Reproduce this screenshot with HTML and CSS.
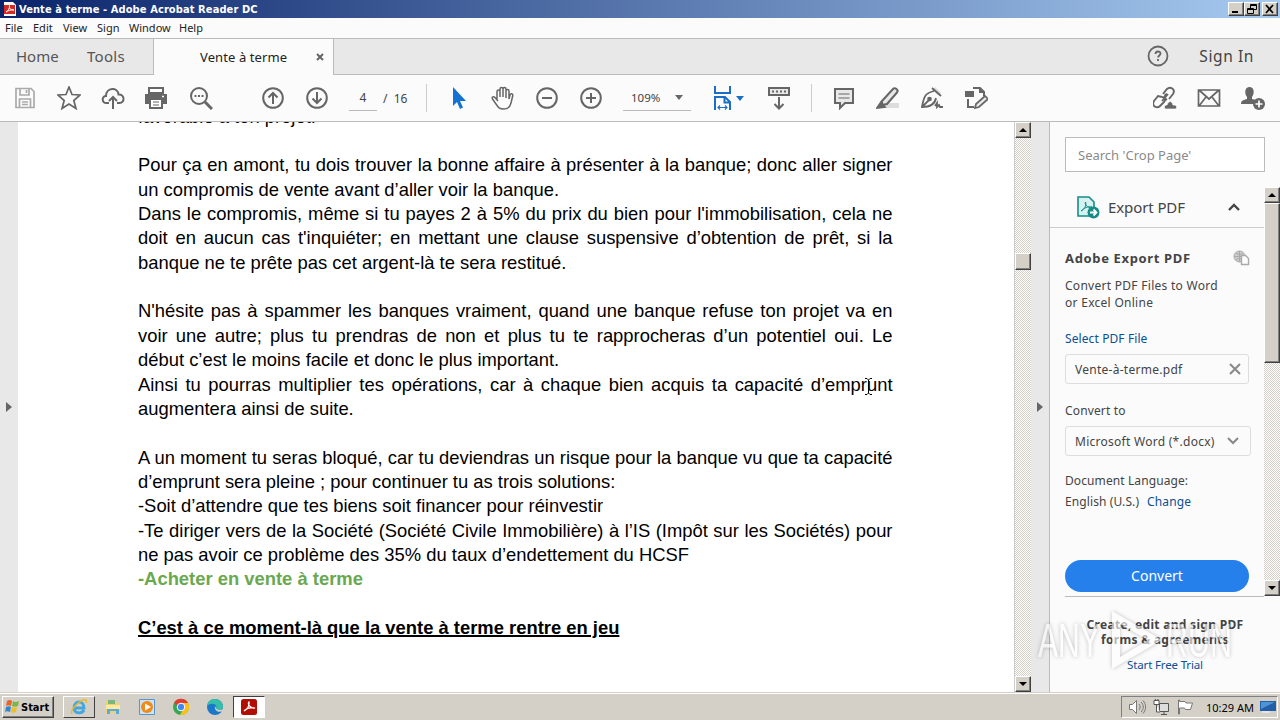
FILE: index.html
```
<!DOCTYPE html>
<html lang="en">
<head>
  <meta charset="UTF-8">
  <title>Vente à terme - Adobe Acrobat Reader DC</title>
  <link rel="stylesheet" href="styles.css">
</head>
<body>
  <div class="titlebar">
    <svg class="app-icon" width="12" height="16" viewBox="0 0 12 16"><path d="M0 1h9l3 3v11H0z" fill="#fff"/><path d="M0 4h11v9H0z" fill="#d9281e"/><path d="M2 11c2-1 4-4 3.500-6.500C5 8 7 9 10 9 7 8.500 4 9.500 2 11" fill="none" stroke="#fff"/></svg>
    <span class="title-text">Vente à terme - Adobe Acrobat Reader DC</span>
    <div class="window-buttons">
      <span class="win-btn"><svg width="12" height="10"><path d="M2 8h6" stroke="#000" stroke-width="2"/></svg></span>
      <span class="win-btn"><svg width="12" height="10" fill="none" stroke="#000"><path d="M4.500 4V.5h6v5H8M4 1.500h7M1.500 4.500h6v5h-6zM1 5.500h7"/></svg></span>
      <span class="win-btn close"><svg width="12" height="10"><path d="M2 1l7 8M9 1L2 9" stroke="#000" stroke-width="1.700"/></svg></span>
    </div>
  </div>
  <div class="menubar">
    <span class="menu-file">File</span><span class="menu-edit">Edit</span><span class="menu-view">View</span><span class="menu-sign">Sign</span><span class="menu-window">Window</span><span>Help</span>
  </div>
  <div class="tabbar">
    <div class="main-tabs"><span class="tab-home">Home</span><span class="tab-tools">Tools</span></div>
    <div class="doc-tab"><span>Vente à terme</span><svg width="8" height="8"><path d="M1 1l6 6M7 1L1 7" stroke="#666" stroke-width="2"/></svg></div>
    <div class="account">
      <svg width="22" height="22" viewBox="0 0 22 22"><circle cx="11" cy="11" r="9.500" fill="none" stroke="#666" stroke-width="1.800"/><path d="M8.500 9c0-3.300 5-3.200 5-.4 0 1.900-2.400 1.800-2.400 4M11 14v2" fill="none" stroke="#666" stroke-width="1.800"/></svg>
      <span class="sign-in">Sign In</span>
    </div>
  </div>

  <div class="toolbar">
    <span class="tool"><svg viewBox="0 0 24 24" stroke="#aaa"><path d="M3 2.500h15l3 3v16H3zM7 3v6h9V3M6.500 21v-8h11v8M13.500 4v3M9 16h6M9 18.500h6"/></svg></span>
    <span class="tool"><svg viewBox="0 0 24 24"><path d="M12 1l3 7.500 8 .5-6.200 5.500 2.200 8-7-4.500-7 4.500 2.200-8L1 9l8-.5z"/></svg></span>
    <span class="tool"><svg viewBox="0 0 24 24" stroke-width="2"><path d="M8 17H5.500C.5 17 .5 10 5 10 5 1 17 1 17.500 8.500 24 8 24 17 18.500 17H16M12 23V11M8 15l4-4 4 4"/></svg></span>
    <span class="tool printer"><svg viewBox="0 0 24 24"><path d="M5 2h14v5H5z" fill="#fff" stroke-width="2"/><path d="M1 8h22v10H1z" fill="#666" stroke="none"/><path d="M6 13h12v9H6z" fill="#fff" stroke-width="2"/><path d="M9 16h6M9 19h6" stroke-width="1"/><path d="M18 10.500h2" stroke="#fff"/></svg></span>
    <span class="tool"><svg viewBox="0 0 24 24"><circle cx="10" cy="10" r="8" stroke-width="2"/><path d="M16 16l7 7" stroke-width="3"/><path d="M5.500 10h2M9 10h2M12.500 10h2" stroke-width="2"/></svg></span>
    <span class="tool page-up"><svg viewBox="0 0 24 24"><circle cx="12" cy="12" r="9.800" stroke-width="2"/><path d="M12 18V7M7.500 11.500L12 7l4.500 4.500" stroke-width="2"/></svg></span>
    <span class="tool"><svg viewBox="0 0 24 24"><circle cx="12" cy="12" r="9.800" stroke-width="2"/><path d="M12 6v11M7.500 12.500L12 17l4.500-4.500" stroke-width="2"/></svg></span>
    <span class="page-input">4</span><span class="page-total">/&nbsp; 16</span>
    <span class="separator"></span>
    <span class="tool pointer"><svg viewBox="0 0 24 24"><path d="M6 1v19l4-4 3 7 3-1.500-3-6.500h6z" fill="#1473d2" stroke="none"/></svg></span>
    <span class="tool"><svg viewBox="0 0 24 24"><path d="M6 14V5.500c0-2 3-2 3 0V11 3c0-2 3-2 3 0v8V3c0-2 3-2 3 0v9V5c0-2 3-2 3 0v8l1-4c.7-2 3-1.500 2.800.5L20 17c-1 4-3 6-7 6-5 0-6-2-8-5l-3.500-5c-1-2 1-3 2.500-1.500L7 15" stroke-width="1.500"/></svg></span>
    <span class="tool"><svg viewBox="0 0 24 24"><circle cx="12" cy="12" r="9.800" stroke-width="2"/><path d="M7 12h10" stroke-width="2"/></svg></span>
    <span class="tool"><svg viewBox="0 0 24 24"><circle cx="12" cy="12" r="9.800" stroke-width="2"/><path d="M7 12h10M12 7v10" stroke-width="2"/></svg></span>
    <span class="zoom-box"><span>109%</span><i class="caret"></i></span>
    <span class="tool fit"><svg viewBox="0 0 24 24" stroke="#1a6fc4"><path d="M4 0v7h15V0M4 24V11h10l5 5v8M13.500 11v5.500H19" stroke-width="2"/><path d="M7 21.500h9M9 19.500l-2 2 2 2M14 19.500l2 2-2 2" stroke-width="1.200"/></svg><i class="caret blue"></i></span>
    <span class="tool"><svg viewBox="0 0 24 24"><path d="M2 2h20v7H2z" fill="#e8e8e8" stroke-width="2"/><path d="M5 5.500h14" stroke-width="2" stroke-dasharray="2 2"/><path d="M12 11v11M7.500 18l4.500 4.500 4.500-4.500" stroke-width="2"/></svg></span>
    <span class="separator sep-two"></span>
    <span class="tool"><svg viewBox="0 0 24 24"><path d="M3 3h18v14h-8l-5 5v-5H3z" fill="#e8e8e8" stroke-width="2"/><path d="M6.500 8h11M6.500 12h11" stroke-width="1.200"/></svg></span>
    <span class="tool"><svg viewBox="0 0 24 24"><path d="M10 17h13v5H8z" fill="#ddd" stroke="none"/><path d="M6 15L17 3c2-2 6 1 4 3.500L11 18l-5 1z" fill="#e8e8e8" stroke-width="2"/><path d="M1 22l4-6 4 5z" fill="#666"/></svg></span>
    <span class="tool"><svg viewBox="0 0 24 24"><path d="M15 1l6 6-3 2-5-5z" fill="#ddd" stroke="none"/><path d="M12 2l9 8M14 5C6 7 4 9 2 21c9 0 13-3 14-9M2 21l7-7M15 20l2-3 0 4 2-2 1 2h3" stroke-width="1.800"/><circle cx="9.500" cy="13" r="1.500" fill="#666"/></svg></span>
    <span class="tool"><svg viewBox="0 0 24 24"><path d="M9 2h7l4 4v4M16 2v4h4M4 13v8h6" stroke-width="2"/><path d="M1 5h9v6H1z" fill="#666" stroke="none"/><path d="M11 22l1-4 9-8 3 3-9 8z" fill="#e8e8e8"/></svg></span>
    <span class="tool share"><svg viewBox="0 0 24 24"><path d="M9 15l6-7M10 8l4-5c3-3 9 0 6 5l-4 5M9 11l-4-1-4 5c-3 5 3 8 6 5l4-4M9 11c3 0 4 3 2 5M14 8c-3 1-3 4 0 6" stroke-width="1.900"/><path d="M12 23c-2-4 2-4 2-4 2-5 5-4 6 0 4 0 4 2 3 4z" fill="#666" stroke="#fbfbfb" stroke-width=".7"/></svg></span>
    <span class="tool"><svg viewBox="0 0 24 24"><path d="M1.500 4h21v16h-21zM2 4l10 9L22 4M2 20l7-9M22 20l-7-9"/></svg></span>
    <span class="tool"><svg viewBox="0 0 24 24"><path d="M0 18c0-4 3-4 6-5V11C3 7 4 1 8.500 1S14 7 11 11v2l4 1-2 4z" fill="#666" stroke="none"/><circle cx="18" cy="18" r="6" fill="#666" stroke="none"/><path d="M14.500 18h7M18 14.500v7" stroke="#fff"/></svg></span>
  </div>

  <div class="workspace">
    <div class="side-strip left"><i class="arrow-right"></i></div>
    <div class="page">
      <div class="line">favorable à ton projet.</div>
      <div class="line"></div>
      <div class="line full">Pour ça en amont, tu dois trouver la bonne affaire à présenter à la banque; donc aller signer</div>
      <div class="line">un compromis de vente avant d’aller voir la banque.</div>
      <div class="line full">Dans le compromis, même si tu payes 2 à 5% du prix du bien pour l'immobilisation, cela ne</div>
      <div class="line full">doit en aucun cas t'inquiéter; en mettant une clause suspensive d’obtention de prêt, si la</div>
      <div class="line">banque ne te prête pas cet argent-là te sera restitué.</div>
      <div class="line"></div>
      <div class="line full">N'hésite pas à spammer les banques vraiment, quand une banque refuse ton projet va en</div>
      <div class="line full">voir une autre; plus tu prendras de non et plus tu te rapprocheras d’un potentiel oui. Le</div>
      <div class="line">début c’est le moins facile et donc le plus important.</div>
      <div class="line full">Ainsi tu pourras multiplier tes opérations, car à chaque bien acquis ta capacité d’emprunt</div>
      <div class="line">augmentera ainsi de suite.</div>
      <div class="line"></div>
      <div class="line full">A un moment tu seras bloqué, car tu deviendras un risque pour la banque vu que ta capacité</div>
      <div class="line">d’emprunt sera pleine ; pour continuer tu as trois solutions:</div>
      <div class="line">-Soit d’attendre que tes biens soit financer pour réinvestir</div>
      <div class="line full">-Te diriger vers de la Société (Société Civile Immobilière) à l’IS (Impôt sur les Sociétés) pour</div>
      <div class="line">ne pas avoir ce problème des 35% du taux d’endettement du HCSF</div>
      <div class="line green">-Acheter en vente à terme</div>
      <div class="line"></div>
      <div class="line strong">C’est à ce moment-là que la vente à terme rentre en jeu</div>
      <svg class="text-cursor" width="9" height="17" fill="none" stroke="#000"><path d="M1 .5h2l1.500 1.500L6 .5h2M4.500 2v13M1 16.500h2L4.500 15 6 16.500h2"/></svg>
    </div>
    <div class="scrollbar doc-scroll"><span class="sb-btn"><i class="up"></i></span><span class="sb-thumb"></span><span class="sb-btn"><i class="down"></i></span></div>
    <div class="side-strip right"><i class="arrow-right"></i></div>
    <div class="panel">
      <div class="search">Search 'Crop Page'</div>
      <div class="panel-body">
        <div class="panel-content">
          <div class="export-head">
            <svg width="24" height="24" viewBox="0 0 24 24" fill="none"><path d="M2 2h11l5 5v14H2z" fill="#d5f2f1" stroke="#168c87" stroke-width="1.600"/><path d="M5 16c3-1 6-6 4.500-9C8 9 12 14 16 12c-4-1-8 1-11 4" stroke="#168c87"/><circle cx="17.500" cy="17.500" r="6" fill="#168c87"/><path d="M14 17.500h6M17.500 14.500l3 3-3 3" stroke="#fff" stroke-width="1.800"/></svg>
            <span>Export PDF</span>
            <svg class="chevron" width="12" height="8"><path d="M1 7l5-5 5 5" fill="none" stroke="#444" stroke-width="2.400"/></svg>
          </div>
          <div class="export-form">
            <div class="form-title"><span>Adobe Export PDF</span><svg width="17" height="16" fill="none" stroke="#aaa"><circle cx="6.500" cy="6.500" r="5.500" fill="#ccc"/><path d="M1 6.500h11M6.500 1v11M3 3c3 2 5 2 7 0M3 10c2-2 4-2 6 0"/><path d="M8.500 5.500h4l3 3v6h-7z" fill="#fff" stroke-width="1.400"/></svg></div>
            <div class="form-desc"><span class="desc-one">Convert PDF Files to Word</span><br><span>or Excel Online</span></div>
            <a class="select-file">Select PDF File</a>
            <div class="field file"><span>Vente-à-terme.pdf</span><svg width="12" height="12"><path d="M1 1l10 10M11 1L1 11" stroke="#888" stroke-width="2"/></svg></div>
            <div class="convert-label">Convert to</div>
            <div class="field format"><span>Microsoft Word (*.docx)</span><svg width="12" height="8"><path d="M1 1l5 5 5-5" fill="none" stroke="#888" stroke-width="2"/></svg></div>
            <div class="language">Document Language:</div>
            <div class="language-value"><span>English (U.S.)</span><a>Change</a></div>
            <div class="convert-btn">Convert</div>
          </div>
        </div>
        <div class="scrollbar panel-scroll"><span class="sb-btn"><i class="up"></i></span><span class="sb-thumb"></span><span class="sb-btn"><i class="down"></i></span></div>
      </div>
      <div class="promo">
        <div class="promo-one">Create, edit and sign PDF</div>
        <div class="promo-two">forms &amp; agreements</div>
        <a>Start Free Trial</a>
      </div>
      <svg class="watermark" width="204" height="70" viewBox="0 0 204 70">
        <text x="3" y="49" textLength="62" lengthAdjust="spacingAndGlyphs">ANY</text>
        <text x="131" y="49" textLength="66" lengthAdjust="spacingAndGlyphs">RUN</text>
        <path d="M77 3v58l50-29zM85 16v33l28-17z" fill-rule="evenodd"/>
      </svg>
    </div>
  </div>

  <div class="taskbar">
    <div class="start"><svg width="17" height="16" viewBox="0 0 17 16"><path d="M3 2c2-1.500 4-1 5 0L7 7C5 6 3 6 2 7z" fill="#e9632c"/><path d="M9 2c2 1.500 4 1 6 0l-1 5c-2 1-4 1-6 0z" fill="#7db648"/><path d="M2 8c2-1 3-1 5 0l-1 5c-2-1-4-1-5 0z" fill="#2f87cf"/><path d="M8 8c2 1 3 1 5 0l-1 5c-2 1-4 1-5 0z" fill="#efbf2b"/></svg>Start</div>
    <span class="task raised"><svg viewBox="0 0 18 18" fill="none"><path d="M4 10h10c0-8-10-8-10 0 0 6 8 6 10 2" stroke="#43a7df" stroke-width="2.800"/><path d="M2 16C-1 12 12 0 16 2c1 1 0 2 0 3" stroke="#e9b82f" stroke-width="1.500"/></svg></span>
    <span class="task"><svg viewBox="0 0 18 18"><path d="M2 3h5l1 2h7v10H2z" fill="#efd36f"/><path d="M4 2h7v4H4z" fill="#79b879"/><path d="M2 7h14v4H2z" fill="#fbe9a4"/><path d="M3 16v-5h12v5h-3v-3H6v3z" fill="#5baad7"/></svg></span>
    <span class="task"><svg viewBox="0 0 18 18"><path d="M1.500 1.500h15v15h-15z" fill="#cde3f4" stroke="#5796cc"/><circle cx="9" cy="9" r="6" fill="#f08a1a"/><path d="M7 5.500l6 3.500-6 3.500z" fill="#fff"/></svg></span>
    <span class="task"><svg viewBox="0 0 18 18"><circle cx="9" cy="9" r="8" fill="#36a852"/><path d="M2 5a8 8 0 0 1 14 0H9v5z" fill="#e33b2e"/><path d="M16 5a8 8 0 0 1-8 12l4-7-3-5z" fill="#fbc116"/><circle cx="9" cy="9" r="3.800" fill="#4285f4" stroke="#fff"/></svg></span>
    <span class="task"><svg viewBox="0 0 18 18"><circle cx="9" cy="9" r="8" fill="#1b78c8"/><path d="M1 8C2-2 17-1 17 9c0 4-7 4-7 1 2-4-5-6-9-2" fill="#35bea9"/><path d="M9 8c-1 5 4 7 8 5l1-3c-2 3-8 2-8 0z" fill="#d4d0c8"/></svg></span>
    <span class="task active"><svg viewBox="0 0 18 18"><rect x="1" y="1" width="16" height="16" rx="2.500" fill="#b20d03"/><path d="M4 13c3-1 6-6 5-9-2 2 2 7 6 6-4-1-8 0-11 3" fill="none" stroke="#fff" stroke-width="1.200"/></svg></span>
    <div class="tray">
      <svg width="18" height="16" viewBox="0 0 18 16" fill="none" stroke="#777"><path d="M1.500 5.500h3l4-4v13l-4-4h-3z" fill="#fff"/><path d="M11 5c1.500 2 1.500 4 0 6M13 3c3 3 3 7 0 10M15 1.500c3.500 4 3.500 9 0 13"/></svg>
      <svg width="17" height="16" viewBox="0 0 17 16" fill="none" stroke="#555"><path d="M6.500 4.500h9v8h-9zM8 15.500h6M11 13v2" fill="#ddd"/><path d="M1 1.500h5v4H1zM3.500 6v7H7M2.500 0v2M5 0v2" fill="#fff"/></svg>
      <svg width="17" height="16" viewBox="0 0 17 16" fill="#fff" stroke="#777"><path d="M1.500 1v14h1V9h5l1 1.500h5L15.500 4H9L8 2.500H2.500V1z"/></svg>
      <span class="clock">10:29 AM</span>
      <svg width="16" height="14" viewBox="0 0 16 14"><path d="M0 1h16v10H0z" fill="#235ea8"/><path d="M1 2h14L1 9z" fill="#4d93d6"/><path d="M2 12h8" stroke="#eee" stroke-width="1.500"/></svg>
    </div>
  </div>
</body>
</html>
```
FILE: styles.css
```
* {
  box-sizing: border-box;
}
body {
  margin: 0;
  width: 1280px;
  height: 720px;
  overflow: hidden;
  display: flex;
  flex-direction: column;
  font-family: "Noto Sans", sans-serif;
  color: #444;
  background: #fbfbfb;
}
svg {
  display: block;
  flex: none;
}
span, a {
  white-space: nowrap;
}
.titlebar {
  display: flex;
  align-items: center;
  height: 18px;
  padding: 0 2px 0 4px;
  background: linear-gradient(90deg, #0a246a, #a6caf0);
}
.title-text {
  margin-left: 3px;
  color: #fff;
  font: bold 11px "DejaVu Sans Condensed", sans-serif;
  letter-spacing: 0.1px;
}
.window-buttons {
  display: flex;
  margin-left: auto;
}
.win-btn, .sb-btn, .sb-thumb {
  background: #d4d0c8;
  border: 1px solid;
  border-color: #fff #404040 #404040 #fff;
  box-shadow: inset -1px -1px #808080;
}
.win-btn {
  width: 16px;
  height: 14px;
  padding: 1px;
}
.close {
  margin-left: 2px;
}
.menubar {
  display: flex;
  align-items: center;
  height: 20px;
  padding: 0 0 2px 5px;
  font-size: 11px;
  color: #222;
}
.menubar span {
  margin-right: 13px;
}
.menubar .menu-file {
  width: 16px;
  margin-right: 12px;
}
.menubar .menu-edit {
  width: 18px;
  margin-right: 12px;
}
.menubar .menu-view {
  width: 22px;
  margin-right: 12px;
}
.menubar .menu-sign {
  width: 20px;
  margin-right: 12px;
}
.menubar .menu-window {
  width: 38px;
  margin-right: 12px;
}
.tabbar {
  display: flex;
  height: 37px;
  border-top: 1px solid #bbb;
  background: #e8e8e8;
}
.main-tabs {
  width: 154px;
  display: flex;
  align-items: center;
  padding: 0 0 1px 16px;
  border: solid #bbb;
  border-width: 0 1px 1px 0;
  font-size: 15px;
  color: #555;
}
.tab-home {
  width: 71px;
}
.tab-tools {
  letter-spacing: 0.3px;
}
.doc-tab {
  width: 180px;
  display: flex;
  align-items: center;
  justify-content: space-between;
  padding: 0 9px 0 46px;
  border-right: 1px solid #bbb;
  background: #fbfbfb;
  font-size: 13px;
  letter-spacing: 0.1px;
  color: #222;
}
.account {
  flex: 1;
  display: flex;
  align-items: center;
  justify-content: flex-end;
  padding: 0 26px 1px 0;
  border-bottom: 1px solid #bbb;
}
.sign-in {
  margin-left: 30px;
  font-size: 15.500px;
  letter-spacing: 0.6px;
}
.toolbar {
  display: flex;
  align-items: center;
  height: 47px;
  padding: 0 5px 0 3px;
  border-bottom: 1px solid #bbb;
}
.tool {
  width: 44px;
  display: flex;
  align-items: center;
  justify-content: center;
}
.tool svg {
  width: 24px;
  height: 24px;
  fill: none;
}
.tool svg:not([stroke]) {
  stroke: #666;
}
.tool svg:not([stroke-width]) {
  stroke-width: 1.700;
}
.printer {
  padding-right: 2px;
}
.page-up {
  margin-left: 28px;
}
.page-input {
  width: 28px;
  height: 26px;
  margin-left: 10px;
  border-bottom: 1px solid #bbb;
  text-align: center;
  font-size: 12px;
  line-height: 25px;
}
.page-total {
  width: 43px;
  margin-left: 6px;
  font-size: 12px;
}
.separator {
  width: 1px;
  height: 28px;
  background: #ccc;
}
.pointer {
  margin-left: 10px;
}
.zoom-box {
  width: 68px;
  height: 26px;
  margin: 0 11px 0 10px;
  padding: 0 8px;
  display: flex;
  align-items: center;
  justify-content: space-between;
  border-bottom: 1px solid #bbb;
  font-size: 11.500px;
}
.caret {
  border: solid transparent;
  border-width: 5px 4px 0;
  border-top-color: #666;
}
.caret.blue {
  border-top-color: #1a6fc4;
  margin-left: 1px;
}
.fit {
  width: 55px;
  padding-right: 4px;
}
.sep-two {
  margin: 0 10px;
}
.share {
  margin-left: auto;
}
.workspace {
  display: flex;
  height: 570px;
}
.side-strip {
  width: 18px;
  display: flex;
  align-items: center;
  padding-left: 6px;
  background: #e8e8e8;
}
.arrow-right {
  border: solid transparent;
  border-width: 5px 0 5px 6px;
  border-left-color: #666;
}
.page {
  width: 996px;
  padding-left: 120px;
  overflow: hidden;
  position: relative;
  background: #fff;
  color: #000;
  font-family: "Liberation Sans", Arial, sans-serif;
  font-size: 18.400px;
}
.line {
  width: 754.500px;
  height: 24.370px;
  line-height: 24.370px;
  white-space: nowrap;
}
.line:first-child {
  margin-top: -17.400px;
}
.full {
  white-space: normal;
  text-align-last: justify;
}
.green {
  color: #6aa84f;
  font-weight: bold;
}
.strong {
  font-weight: bold;
  text-decoration: underline;
  text-decoration-thickness: 2px;
}
.text-cursor {
  position: absolute;
  left: 846px;
  top: 256px;
}
.scrollbar {
  display: flex;
  flex-direction: column;
  justify-content: space-between;
  background: repeating-conic-gradient(#d4d0c8 0 25%, #fff 0 50%) 0 0 / 2px 2px;
}
.sb-btn {
  height: 16px;
  display: flex;
  align-items: center;
  justify-content: center;
}
.up, .down {
  border: solid transparent;
  border-width: 0 4px 4px;
  border-bottom-color: #000;
}
.down {
  border-width: 4px 4px 0;
  border-top-color: #000;
}
.doc-scroll {
  width: 17px;
  border-left: 1px solid #ccc;
}
.doc-scroll .sb-thumb {
  height: 17px;
  margin: 115px 0 auto;
}
.right {
  width: 19px;
  border-right: 1px solid #bbb;
}
.panel {
  width: 230px;
  position: relative;
  padding-top: 15px;
}
.search {
  width: 200px;
  height: 35px;
  margin-left: 15px;
  padding-left: 12px;
  border: 1px solid #bbb;
  background: #fff;
  color: #8a8a8a;
  font-size: 13px;
  line-height: 34px;
}
.panel-body {
  display: flex;
  height: 409px;
  margin-top: 15px;
}
.panel-content {
  width: 214px;
}
.export-head {
  display: flex;
  align-items: center;
  height: 41px;
  padding: 0 24px 0 26px;
  border-bottom: 1px solid #ccc;
  font-size: 15px;
}
.export-head span {
  margin-left: 8px;
  letter-spacing: -0.1px;
}
.chevron {
  margin-left: auto;
}
.export-form {
  height: 369px;
  margin-left: 15px;
  padding-top: 20px;
  border-bottom: 1px solid #bbb;
  font-size: 12px;
}
.form-title {
  display: flex;
  align-items: center;
  justify-content: space-between;
  height: 20px;
  padding-right: 14px;
  font-size: 13px;
  font-weight: bold;
  letter-spacing: 0.65px;
}
.form-desc {
  margin-top: 9px;
  line-height: 17px;
  letter-spacing: 0.28px;
}
.export-form a, .promo a {
  color: #0b4f94;
}
.select-file {
  display: block;
  margin-top: 18px;
  line-height: 20px;
  letter-spacing: 0.1px;
}
.field {
  display: flex;
  align-items: center;
  justify-content: space-between;
  height: 30px;
  border: 1px solid #ddd;
  border-radius: 3px;
  padding: 0 7px 0 9px;
  letter-spacing: 0.27px;
}
.file {
  width: 184px;
  margin-top: 5px;
}
.convert-label {
  height: 20px;
  margin: 17px 0 5px;
  line-height: 20px;
  letter-spacing: 0.15px;
}
.format {
  width: 186px;
  padding-right: 11px;
}
.language {
  margin-top: 14px;
  line-height: 21px;
  letter-spacing: 0.1px;
}
.language-value {
  display: flex;
  gap: 8px;
  line-height: 21px;
  letter-spacing: 0.1px;
}
.convert-btn {
  width: 184px;
  height: 32px;
  margin-top: 48px;
  border-radius: 16px;
  background: #2680eb;
  color: #fff;
  text-align: center;
  font-size: 14px;
  line-height: 31px;
}
.panel-scroll {
  width: 16px;
}
.panel-scroll .sb-thumb {
  height: 160px;
  margin-bottom: auto;
}
.promo {
  display: flex;
  flex-direction: column;
  align-items: center;
  margin-top: 21px;
  font-size: 12px;
  font-weight: bold;
  line-height: 15px;
  letter-spacing: 0.3px;
}
.promo a {
  margin-top: 10px;
  font-size: 11.500px;
  font-weight: normal;
  letter-spacing: -0.15px;
}
.watermark {
  position: absolute;
  left: -15px;
  top: 486px;
  fill: #fff;
  opacity: 0.6;
  font: 48px "Liberation Sans", Arial, sans-serif;
  filter: drop-shadow(0 0 2px rgba(0, 0, 0, 0.4));
}
.taskbar {
  display: flex;
  align-items: center;
  height: 28px;
  padding: 1px 2px 0;
  border-top: 1px solid #d4d0c8;
  box-shadow: inset 0 1px #fff;
  background: #d4d0c8;
}
.start {
  display: flex;
  align-items: center;
  width: 52px;
  height: 22px;
  padding-left: 1px;
  border: 1px solid;
  border-color: #fff #404040 #404040 #fff;
  box-shadow: inset -1px -1px #808080;
  color: #000;
  font: bold 11px "DejaVu Sans Condensed", sans-serif;
}
.task {
  width: 32px;
  height: 22px;
  margin-right: 2px;
  display: flex;
  align-items: center;
  justify-content: center;
}
.task svg {
  width: 18px;
  height: 18px;
}
.raised {
  margin-left: 9px;
  border: 1px solid;
  border-color: #fff #404040 #404040 #fff;
}
.active {
  border: 1px solid;
  border-color: #404040 #fff #fff #404040;
  background: #fff;
}
.tray {
  display: flex;
  align-items: center;
  width: 157px;
  height: 22px;
  margin-left: auto;
  padding-left: 6px;
  gap: 7px;
  border: 1px solid;
  border-color: #808080 #fff #fff #808080;
}
.clock {
  width: 46px;
  margin: 0 1px 0 5px;
  color: #000;
  font-size: 11px;
}
```
